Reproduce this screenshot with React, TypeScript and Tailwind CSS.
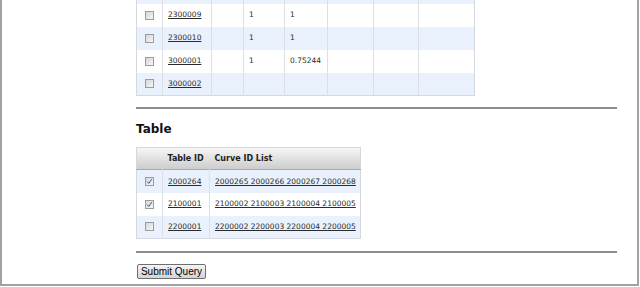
import React from "react";

type Row = { id: string; a?: string; b?: string };

const topRows: Row[] = [
  { id: "" },
  { id: "2300009", a: "1", b: "1" },
  { id: "2300010", a: "1", b: "1" },
  { id: "3000001", a: "1", b: "0.75244" },
  { id: "3000002" },
];

const tableRows = [
  { id: "2000264", list: "2000265 2000266 2000267 2000268", checked: true },
  { id: "2100001", list: "2100002 2100003 2100004 2100005", checked: true },
  { id: "2200001", list: "2200002 2200003 2200004 2200005", checked: false },
];

function Box({ checked }: { checked?: boolean }) {
  return (
    <span className="mx-auto flex h-[9px] w-[9px] items-center justify-center border border-[#9c9c9c] bg-gradient-to-br from-[#d6d6d6] to-[#f7f7f7]">
      {checked && (
        <svg width="7" height="7" viewBox="0 0 7 7">
          <path d="M1.2 3.6 L2.8 5.4 L5.8 1.2" fill="none" stroke="#3a4fae" strokeWidth="1" />
        </svg>
      )}
    </span>
  );
}

const cell = "whitespace-nowrap border-l border-[#dcdfe5] px-[5px] align-middle";

export default function App() {
  return (
    <div
      className="h-[286px] w-[639px] overflow-hidden border-b-2 border-l-2 border-r-2 border-[#a2a2a2] bg-white pl-[134px] text-[#2b2b2b]"
      style={{ fontFamily: '"DejaVu Sans", Verdana, sans-serif' }}
    >
      <div className="-mt-[20px]">
        {/* results table, scrolled partly out of view */}
        <table className="w-[338px] table-fixed border-collapse border border-[#d5d9df] text-[7.5px]">
          <colgroup>
            <col className="w-[26px]" />
            <col className="w-[49px]" />
            <col className="w-[32px]" />
            <col className="w-[41px]" />
            <col className="w-[43px]" />
            <col className="w-[46px]" />
            <col className="w-[45px]" />
            <col className="w-[56px]" />
          </colgroup>
          <tbody>
            {topRows.map((r, i) => (
              <tr key={i} className={`h-[23px] ${i % 2 === 0 ? "bg-[#e9f1fc]" : "bg-white"}`}>
                <td className="align-middle">{r.id && <Box />}</td>
                <td className={cell}>
                  {r.id && <a className="underline">{r.id}</a>}
                </td>
                <td className={cell}></td>
                <td className={cell}>{r.a}</td>
                <td className={cell}>{r.b}</td>
                <td className={cell}></td>
                <td className={cell}></td>
                <td className={cell}></td>
              </tr>
            ))}
          </tbody>
        </table>

        <div className="mt-[11px] h-[2px] w-[481px] bg-[#8c8c8c]" />

        <h2 className="mt-[13px] h-[14px] text-[12px] font-bold leading-[14px] text-[#111]">Table</h2>

        <table className="mt-[11px] w-[224px] table-fixed border-collapse border border-[#d5d9df] text-[7.5px]">
          <colgroup>
            <col className="w-[26px]" />
            <col className="w-[47px]" />
            <col className="w-[151px]" />
          </colgroup>
          <thead>
            <tr className="h-[22px] border-b border-[#a9a9a9] bg-gradient-to-b from-[#f6f6f6] to-[#cdcdcd] text-left text-[8px] font-bold text-[#1e1e1e]">
              <th></th>
              <th className="whitespace-nowrap px-[5px] font-bold">Table ID</th>
              <th className="whitespace-nowrap px-[5px] font-bold">Curve ID List</th>
            </tr>
          </thead>
          <tbody>
            {tableRows.map((r, i) => (
              <tr key={r.id} className={`h-[23px] ${i % 2 === 0 ? "bg-[#e9f1fc]" : "bg-white"}`}>
                <td className="align-middle">
                  <Box checked={r.checked} />
                </td>
                <td className={cell}>
                  <a className="underline">{r.id}</a>
                </td>
                <td className={cell}>
                  <a className="underline">{r.list}</a>
                </td>
              </tr>
            ))}
          </tbody>
        </table>

        <div className="mt-[12px] h-[2px] w-[481px] bg-[#8c8c8c]" />

        <button
          className="ml-[1px] mt-[11px] h-[15px] w-[69px] rounded-[2px] border border-[#6f6f6f] bg-gradient-to-b from-[#f4f4f4] to-[#d4d4d4] text-[10px] leading-[13px] text-black"
          style={{ fontFamily: '"Liberation Sans", Arial, sans-serif' }}
        >
          Submit Query
        </button>
      </div>
    </div>
  );
}
